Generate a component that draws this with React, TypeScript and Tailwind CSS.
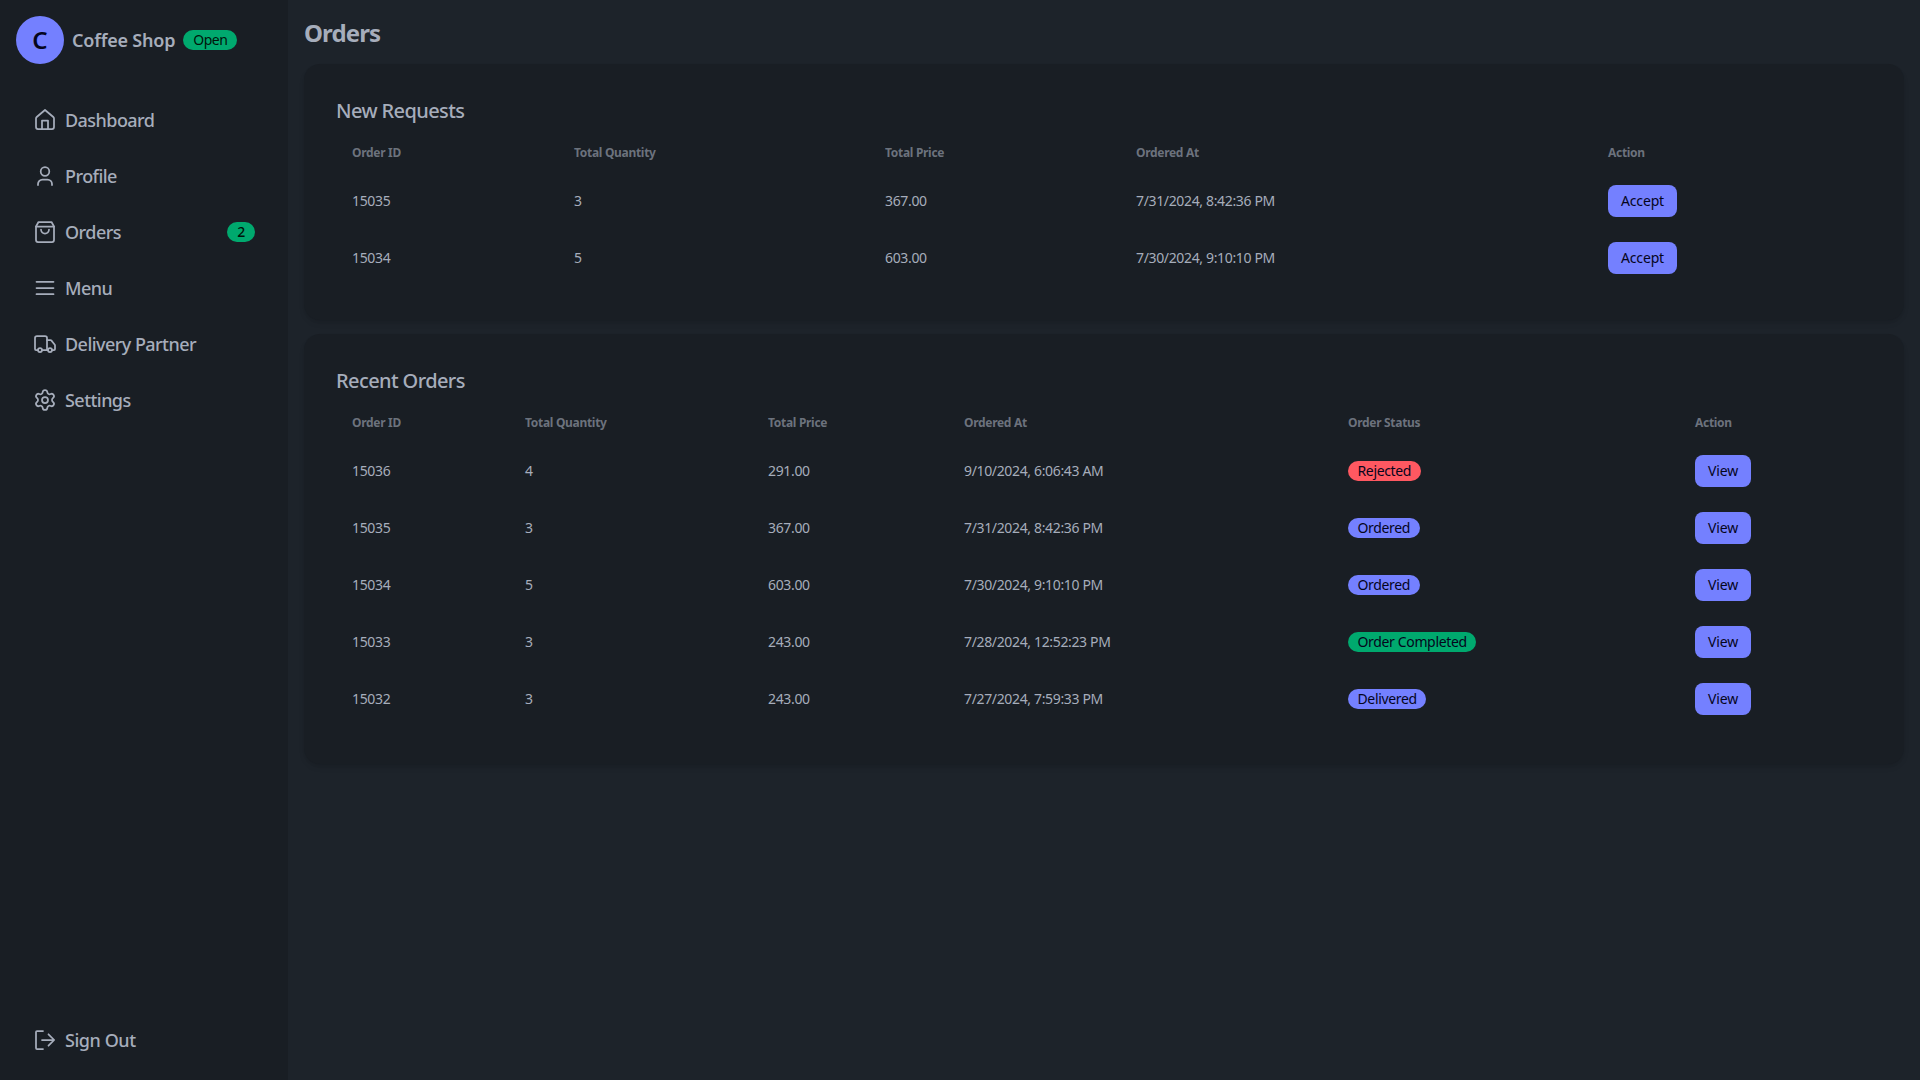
import React from "react";
import { Truck, Settings } from "lucide-react";

const font = "font-['Noto_Sans','Open_Sans',sans-serif]";

function Svg({ children }: { children: React.ReactNode }) {
  return (
    <svg viewBox="0 0 24 24" fill="none" stroke="currentColor" strokeWidth="1.75" strokeLinecap="round" strokeLinejoin="round" className="w-6 h-6 shrink-0">
      {children}
    </svg>
  );
}

const HomeIcon = () => (
  <Svg>
    <path d="M3 10.5a2 2 0 0 1 .7-1.5L12 2l8.3 7a2 2 0 0 1 .7 1.5V19a2 2 0 0 1-2 2H5a2 2 0 0 1-2-2Z" />
    <path d="M9 21v-8.5h6V21" />
  </Svg>
);
const UserIcon = () => (
  <Svg>
    <circle cx="12" cy="7.5" r="4.3" />
    <path d="M5 21v-1a4.5 4.5 0 0 1 4.5-4.5h5A4.5 4.5 0 0 1 19 20v1" />
  </Svg>
);
const BagIcon = () => (
  <Svg>
    <path d="M3 6.5h18V20a2 2 0 0 1-2 2H5a2 2 0 0 1-2-2Z" />
    <path d="M3 6.5 5.5 2h13L21 6.5" />
    <path d="M8 9.5a4 4 0 0 0 8 0" />
  </Svg>
);
const MenuIcon = () => (
  <Svg>
    <path d="M3.5 5.8h17M3.5 12h17M3.5 18.2h17" />
  </Svg>
);
const SignOutIcon = () => (
  <Svg>
    <path d="M10 3H4a1 1 0 0 0-1 1v16a1 1 0 0 0 1 1h6" />
    <path d="M9 12h12M15.5 6.3 21.2 12l-5.7 5.7" />
  </Svg>
);

const nav = [
  { label: "Dashboard", icon: <HomeIcon /> },
  { label: "Profile", icon: <UserIcon /> },
  { label: "Orders", icon: <BagIcon />, badge: "2" },
  { label: "Menu", icon: <MenuIcon /> },
  { label: "Delivery Partner", icon: <Truck className="w-6 h-6 shrink-0" strokeWidth={1.75} /> },
  { label: "Settings", icon: <Settings className="w-6 h-6 shrink-0" strokeWidth={1.75} /> },
];

const newReq = [
  ["15035", "3", "367.00", "7/31/2024, 8:42:36 PM"],
  ["15034", "5", "603.00", "7/30/2024, 9:10:10 PM"],
];

const recent = [
  ["15036", "4", "291.00", "9/10/2024, 6:06:43 AM", "Rejected", "bg-[#ff5861]"],
  ["15035", "3", "367.00", "7/31/2024, 8:42:36 PM", "Ordered", "bg-[#7480ff]"],
  ["15034", "5", "603.00", "7/30/2024, 9:10:10 PM", "Ordered", "bg-[#7480ff]"],
  ["15033", "3", "243.00", "7/28/2024, 12:52:23 PM", "Order Completed", "bg-[#00a96e]"],
  ["15032", "3", "243.00", "7/27/2024, 7:59:33 PM", "Delivered", "bg-[#7480ff]"],
];

function Th({ children }: { children: React.ReactNode }) {
  return <th className="px-4 pt-[13px] pb-[11px] text-left text-xs font-bold text-[#a6adbb]/60 tracking-[-0.3px]">{children}</th>;
}

function Td({ children }: { children: React.ReactNode }) {
  return <td className="px-4 py-3 text-sm tracking-[-0.35px]">{children}</td>;
}

function Btn({ children, wide }: { children: React.ReactNode; wide?: boolean }) {
  return (
    <button className={"flex items-center justify-center h-8 rounded-lg bg-[#7480ff] text-[#05051c] text-sm tracking-[-0.15px] leading-none " + (wide ? "w-[69px]" : "w-14")}>{children}</button>
  );
}

export default function App() {
  return (
    <div className={"flex w-full h-[1080px] overflow-hidden bg-[#1d232a] text-[#a6adbb] " + font}>
      <aside className="w-[288px] shrink-0 h-full bg-[#191e24] flex flex-col">
        <div className="flex items-center h-[80px] pl-4">
          <div className="w-12 h-12 rounded-full bg-[#7480ff] flex items-center justify-center text-[#05051c] text-2xl font-semibold">C</div>
          <span className="ml-2 text-lg font-semibold tracking-[-0.2px]">Coffee Shop</span>
          <span className="ml-2 h-5 px-2.5 rounded-full bg-[#00a96e] text-[#00140a] text-sm leading-5 tracking-[-0.5px]">Open</span>
        </div>
        <nav className="flex flex-col pt-3 px-4 grow">
          {nav.map((n) => (
            <a key={n.label} className="flex items-center gap-2 h-14 px-[17px] text-lg font-medium tracking-[-0.55px]">
              {n.icon}
              <span className="grow">{n.label}</span>
              {n.badge && (
                <span className="w-7 h-5 rounded-full bg-[#00a96e] text-[#00140a] text-sm flex items-center justify-center">{n.badge}</span>
              )}
            </a>
          ))}
        </nav>
        <a className="flex items-center gap-2 h-14 mb-[12px] mx-4 px-[17px] text-lg font-medium tracking-[-0.45px]">
          <SignOutIcon />
          Sign Out
        </a>
      </aside>

      <main className="grow min-w-0 px-4">
        <h1 className="h-[64px] pt-[2px] flex items-center text-2xl font-bold tracking-[-0.9px]">Orders</h1>

        <section className="rounded-2xl bg-[#191e24] p-8 shadow-md h-[256px] mb-[14px]">
          <h2 className="text-xl font-medium tracking-[-0.6px] mt-px h-7 leading-7 mb-[7px]">New Requests</h2>
          <table className="w-full table-fixed">
            <colgroup>
              <col className="w-[222px]" />
              <col className="w-[311px]" />
              <col className="w-[251px]" />
              <col className="w-[472px]" />
              <col />
            </colgroup>
            <thead>
              <tr className="border-b border-[#191e24]"><Th>Order ID</Th><Th>Total Quantity</Th><Th>Total Price</Th><Th>Ordered At</Th><Th>Action</Th></tr>
            </thead>
            <tbody>
              {newReq.map((r) => (
                <tr key={r[0]} className="border-b border-[#191e24]">
                  {r.map((c, i) => <Td key={i}>{c}</Td>)}
                  <Td><Btn wide>Accept</Btn></Td>
                </tr>
              ))}
            </tbody>
          </table>
        </section>

        <section className="rounded-2xl bg-[#191e24] p-8 shadow-md h-[430px]">
          <h2 className="text-xl font-medium tracking-[-0.6px] mt-px h-7 leading-7 mb-[7px]">Recent Orders</h2>
          <table className="w-full table-fixed">
            <colgroup>
              <col className="w-[173px]" />
              <col className="w-[243px]" />
              <col className="w-[196px]" />
              <col className="w-[384px]" />
              <col className="w-[347px]" />
              <col />
            </colgroup>
            <thead>
              <tr className="border-b border-[#191e24]"><Th>Order ID</Th><Th>Total Quantity</Th><Th>Total Price</Th><Th>Ordered At</Th><Th>Order Status</Th><Th>Action</Th></tr>
            </thead>
            <tbody>
              {recent.map((r, k) => (
                <tr key={k} className="border-b border-[#191e24]">
                  <Td>{r[0]}</Td><Td>{r[1]}</Td><Td>{r[2]}</Td><Td>{r[3]}</Td>
                  <Td>
                    <span className={"inline-flex items-center h-5 px-[9.5px] rounded-full text-sm text-[#05051c] " + r[5]}>{r[4]}</span>
                  </Td>
                  <Td><Btn>View</Btn></Td>
                </tr>
              ))}
            </tbody>
          </table>
        </section>
      </main>
    </div>
  );
}
